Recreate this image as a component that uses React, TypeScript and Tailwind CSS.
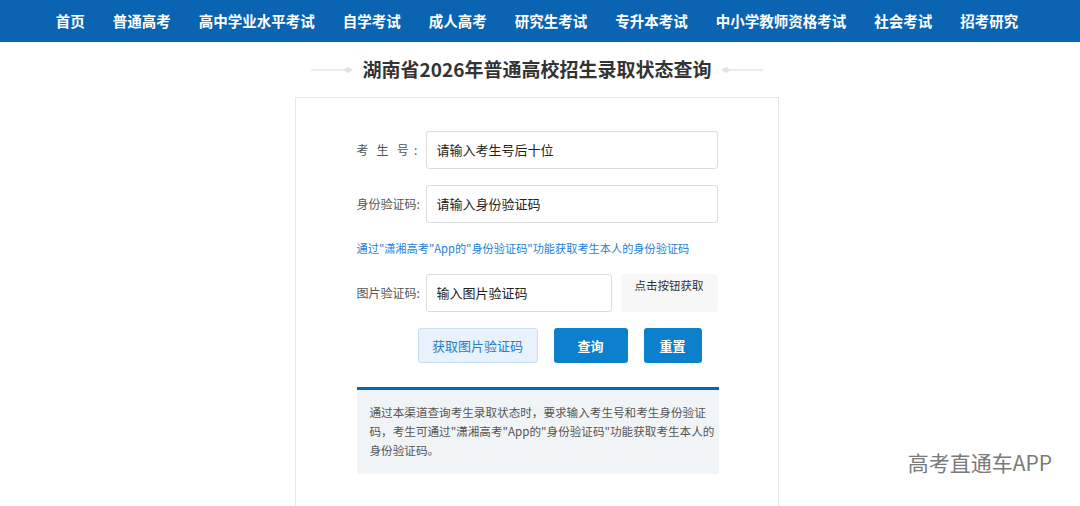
const navItems = [
  "首页",
  "普通高考",
  "高中学业水平考试",
  "自学考试",
  "成人高考",
  "研究生考试",
  "专升本考试",
  "中小学教师资格考试",
  "社会考试",
  "招考研究",
];

const font = { fontFamily: '"Noto Sans CJK SC", "Noto Sans", sans-serif' };

function Ornament({ flip }: { flip?: boolean }) {
  return (
    <svg width="46" height="10" viewBox="0 0 46 10" className={flip ? "-scale-x-100" : ""}>
      <line x1="0" y1="5" x2="36" y2="5" stroke="#e4e4e4" strokeWidth="1.5" />
      <path d="M32 5 L37 2 L42 5 L37 8 Z" fill="#e2e2e2" />
    </svg>
  );
}

export default function App() {
  return (
    <div className="relative min-h-[506px] bg-white" style={font}>
      {/* top nav */}
      <div className="flex h-[42px] items-center justify-center gap-[28px] bg-[#0b64b1] pr-[6px]">
        {navItems.map((item) => (
          <span key={item} className="whitespace-nowrap text-[14.5px] font-bold text-white">
            {item}
          </span>
        ))}
      </div>

      <div className="pr-[6px]">
        {/* title */}
        <div className="flex h-[55px] items-center justify-center gap-[6px]">
          <Ornament />
          <h1 className="text-[19px] font-bold text-[#333]">湖南省2026年普通高校招生录取状态查询</h1>
          <Ornament flip />
        </div>

        {/* card */}
        <div className="mx-auto h-[409px] w-[484px] border border-b-0 border-[#e6e6e6] pl-[1px]">
          <div className="mx-auto mt-[33px] w-[362px]">
            <div className="flex items-center">
              <label className="w-[69px] shrink-0 whitespace-nowrap text-[12px] text-[#555]">
                考&nbsp;&nbsp;&nbsp;生&nbsp;&nbsp;&nbsp;号&nbsp;&nbsp;:
              </label>
              <div className="flex h-[38px] w-[292px] items-center rounded-[3px] border border-[#dcdcdc] px-[10px] text-[13px] text-[#222]">
                请输入考生号后十位
              </div>
            </div>
            <div className="mt-[16px] flex items-center">
              <label className="w-[69px] shrink-0 whitespace-nowrap text-[12px] text-[#555]">身份验证码:</label>
              <div className="flex h-[38px] w-[292px] items-center rounded-[3px] border border-[#dcdcdc] px-[10px] text-[13px] text-[#222]">
                请输入身份验证码
              </div>
            </div>
            <p className="mt-[17px] whitespace-nowrap text-[11.2px] text-[#1b7fd6]">
              通过"潇湘高考"App的"身份验证码"功能获取考生本人的身份验证码
            </p>
            <div className="mt-[17px] flex items-center">
              <label className="w-[69px] shrink-0 whitespace-nowrap text-[12px] text-[#555]">图片验证码:</label>
              <div className="flex h-[38px] w-[186px] items-center rounded-[3px] border border-[#dcdcdc] px-[10px] text-[13px] text-[#222]">
                输入图片验证码
              </div>
              <div className="ml-[9px] h-[38px] w-[97px] rounded-[3px] bg-[#f7f7f7] pt-[3px] text-center text-[11.5px] text-[#333]">
                点击按钮获取
              </div>
            </div>
            <div className="mt-[16px] flex items-center pl-[61px]">
              <button className="h-[35px] w-[120px] rounded-[3px] border border-[#c7dff3] bg-[#e7f2fc] text-[13px] text-[#2a7dc4]">
                获取图片验证码
              </button>
              <button className="ml-[16px] h-[35px] w-[74px] rounded-[3px] bg-[#0c7fcd] text-[13px] font-bold text-white">
                查询
              </button>
              <button className="ml-[16px] h-[35px] w-[58px] rounded-[3px] bg-[#0c7fcd] text-[13px] font-bold text-white">
                重置
              </button>
            </div>
            <div className="mt-[24px] w-[362px] whitespace-nowrap border-t-[3px] border-[#0b64b1] bg-[#f1f4f7] pb-[14px] pl-[13px] pt-[13px] text-[11.6px] leading-[19px] text-[#555]">
              通过本渠道查询考生录取状态时，要求输入考生号和考生身份验证
              <br />
              码，考生可通过"潇湘高考"App的"身份验证码"功能获取考生本人的
              <br />
              身份验证码。
            </div>
          </div>
        </div>
      </div>

      {/* watermark */}
      <div className="absolute bottom-[28px] right-[28px] text-[21px] text-[#7a7a7a]">高考直通车APP</div>
    </div>
  );
}
